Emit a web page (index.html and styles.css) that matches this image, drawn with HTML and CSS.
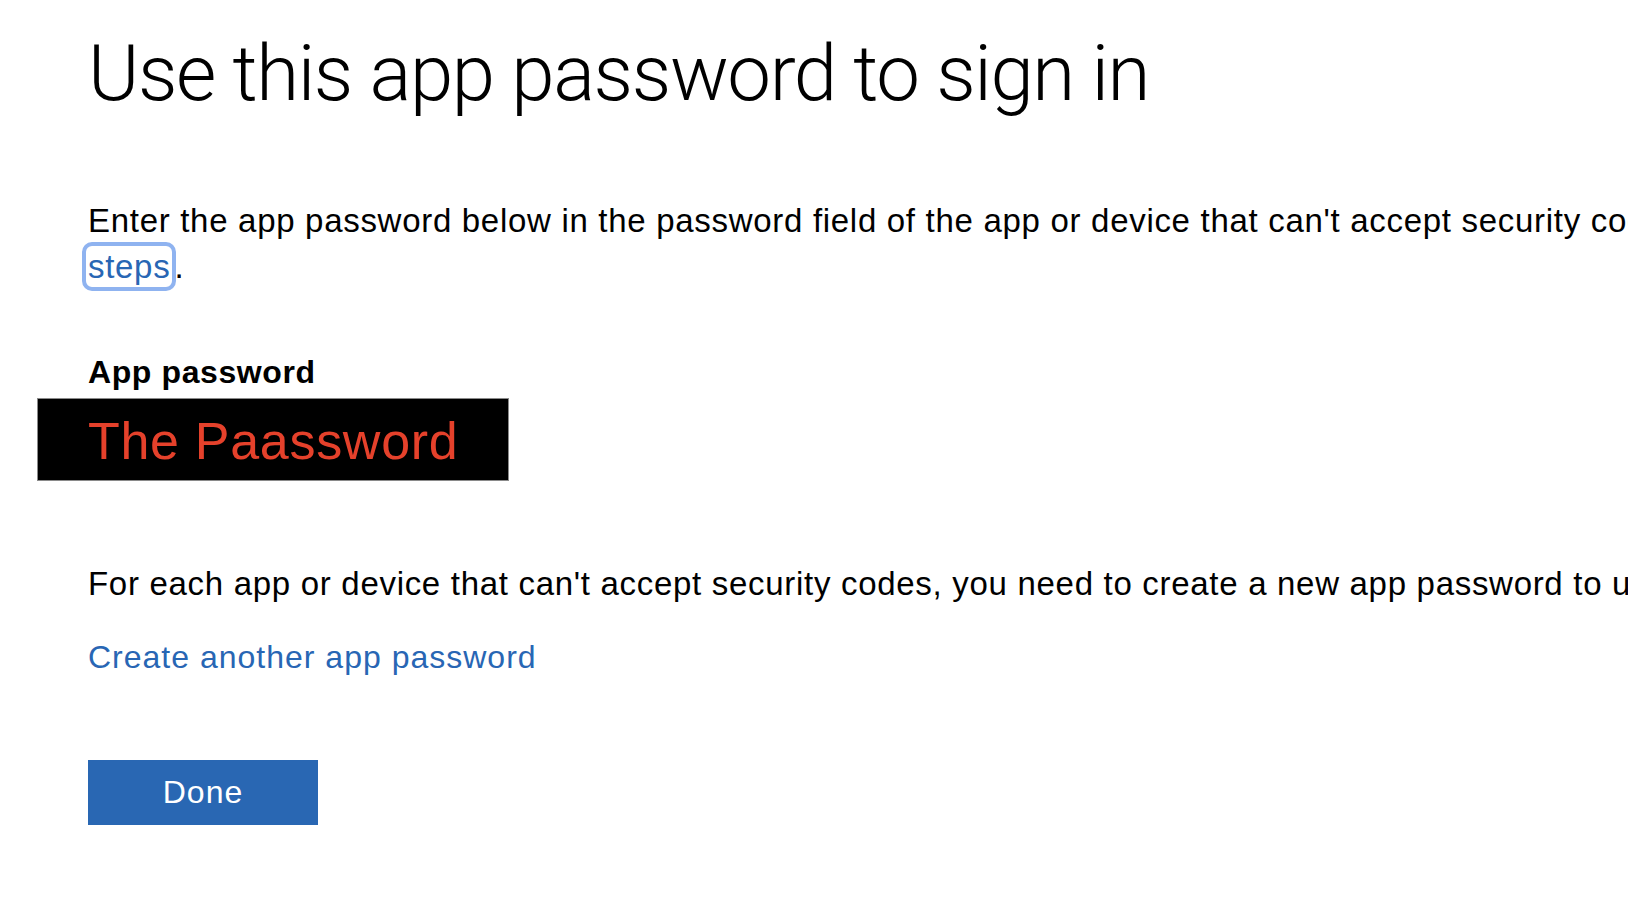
FILE: index.html
```html
<!DOCTYPE html>
<html lang="en">
<head>
<meta charset="utf-8">
<title>Use this app password to sign in</title>
<link rel="stylesheet" href="styles.css">
</head>
<body>
<main class="page">
  <h1 class="title">Use this app password to sign in</h1>
  <p class="intro">Enter the app password below in the password field of the app or device that can't accept security codes. For more info, see the following <a class="link focused" href="#">steps</a>.</p>
  <section class="field">
    <div class="label">App password</div>
    <div class="secret"><span class="secret-text">The Paassword</span></div>
  </section>
  <p class="note">For each app or device that can't accept security codes, you need to create a new app password to use with it.</p>
  <p class="more"><a class="link" href="#">Create another app password</a></p>
  <button class="done" type="button">Done</button>
</main>
</body>
</html>
```
FILE: styles.css
```css
html, body {
  margin: 0;
  padding: 0;
  background: #ffffff;
  overflow: hidden;
}
body {
  width: 1628px;
  height: 912px;
  font-family: "Liberation Sans", Arial, sans-serif;
  color: #000;
}
.page {
  width: 2600px;
  padding: 26px 0 0 88px;
  display: flex;
  flex-direction: column;
  align-items: flex-start;
}
.title {
  margin: 0;
  font-family: Roboto, "Liberation Sans", sans-serif;
  font-weight: 300;
  font-size: 78px;
  line-height: 96px;
  letter-spacing: -1.4px;
}
.intro {
  margin: 76px 0 0 0;
  width: 2120px;
  font-size: 33px;
  line-height: 46px;
  letter-spacing: 0.7px;
}
.link {
  color: #2866b4;
  text-decoration: none;
}
.focused {
  outline: 4px solid #8fb3f0;
  outline-offset: 2px;
  border-radius: 4px;
  margin-right: 4px;
}
.field {
  margin-top: 62px;
}
.label {
  font-size: 32px;
  font-weight: bold;
  line-height: 40px;
  letter-spacing: 0.6px;
}
.secret {
  margin: 6px 0 0 -51px;
  width: 472px;
  height: 83px;
  background: #000;
  border: 1px solid #8a8a8a;
  padding: 12px 0 0 50px;
  box-sizing: border-box;
}
.secret-text {
  display: block;
  color: #e5412b;
  font-size: 52px;
  line-height: 60px;
  letter-spacing: 0.7px;
}
.note {
  margin: 83px 0 0 0;
  width: 2120px;
  font-size: 33px;
  line-height: 40px;
  letter-spacing: 0.7px;
}
.more {
  margin: 33px 0 0 0;
  font-size: 32px;
  line-height: 40px;
  letter-spacing: 1px;
}
.done {
  margin-top: 83px;
  width: 230px;
  height: 65px;
  background: #2967b3;
  border: none;
  border-radius: 0;
  color: #fff;
  font-family: "Liberation Sans", Arial, sans-serif;
  font-size: 32px;
  letter-spacing: 1px;
  padding: 0;
}
```
